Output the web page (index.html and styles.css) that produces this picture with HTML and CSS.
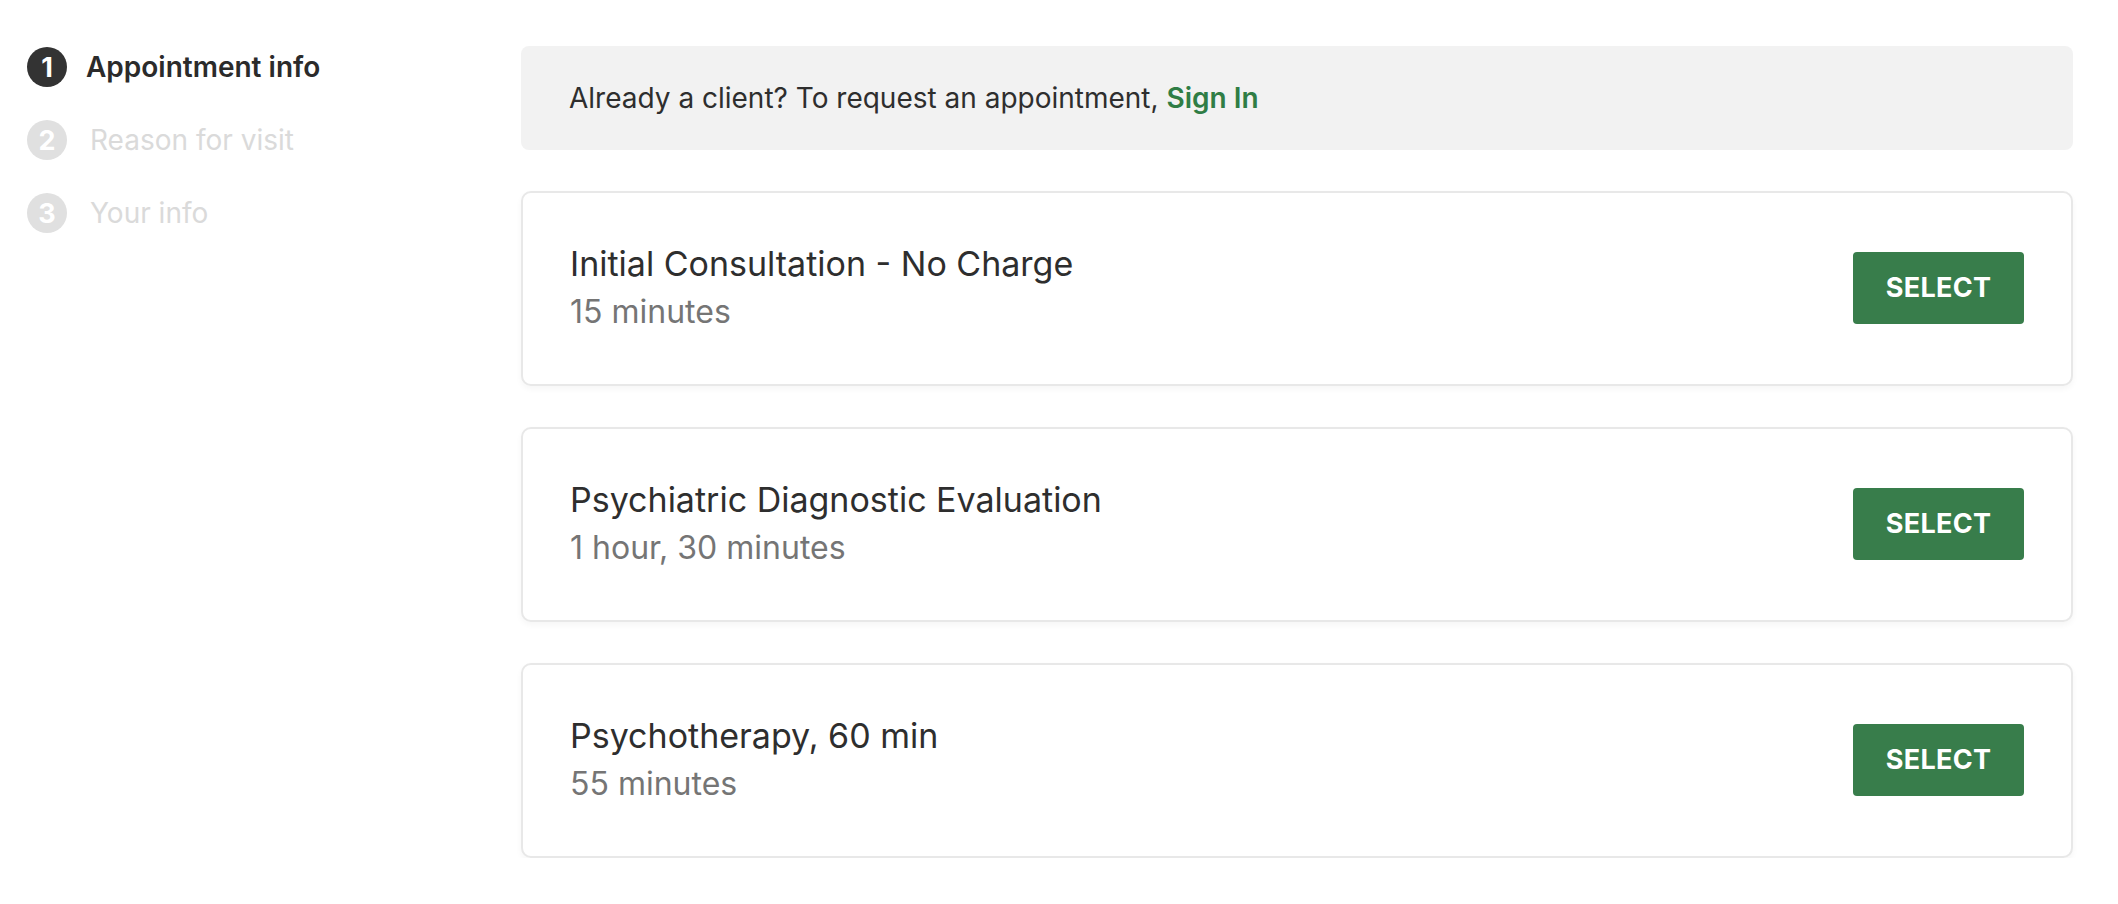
FILE: index.html
```html
<!DOCTYPE html>
<html lang="en">
<head>
<meta charset="utf-8">
<title>Request appointment</title>
<link rel="stylesheet" href="styles.css">
</head>
<body>
<div class="page">
  <nav class="steps">
    <div class="step active"><span class="num">1</span><span class="label">Appointment info</span></div>
    <div class="step"><span class="num">2</span><span class="label">Reason for visit</span></div>
    <div class="step"><span class="num">3</span><span class="label">Your info</span></div>
  </nav>
  <main class="main">
    <div class="banner">Already a client? To request an appointment,&nbsp;<a class="signin" href="#">Sign In</a></div>
    <div class="card">
      <div class="info">
        <div class="title">Initial Consultation - No Charge</div>
        <div class="duration">15 minutes</div>
      </div>
      <button class="select">SELECT</button>
    </div>
    <div class="card">
      <div class="info">
        <div class="title">Psychiatric Diagnostic Evaluation</div>
        <div class="duration">1 hour, 30 minutes</div>
      </div>
      <button class="select">SELECT</button>
    </div>
    <div class="card">
      <div class="info">
        <div class="title">Psychotherapy, 60 min</div>
        <div class="duration">55 minutes</div>
      </div>
      <button class="select">SELECT</button>
    </div>
  </main>
</div>
</body>
</html>
```

FILE: styles.css
```css
* { box-sizing: border-box; }
html, body { margin: 0; padding: 0; background: #fff; }
body {
  font-family: Inter, "Noto Sans", "Liberation Sans", sans-serif;
  color: #2e2e2e;
}
.page {
  display: flex;
  align-items: flex-start;
  padding: 46px 45px 0 27px;
}
.steps {
  width: 494px;
  flex: none;
  display: flex;
  flex-direction: column;
  gap: 33px;
  padding-top: 1px;
}
.step {
  display: flex;
  align-items: center;
  gap: 23px;
  height: 40px;
}
.num {
  width: 40px;
  height: 40px;
  border-radius: 50%;
  background: #e0e0e0;
  color: #fff;
  font-weight: 700;
  font-size: 27px;
  display: flex;
  align-items: center;
  justify-content: center;
}
.label {
  font-size: 28px;
  color: #dadada;
  font-weight: 400;
}
.step.active { gap: 19px; }
.step.active .num { background: #333; }
.step.active .label { color: #2b2b2b; font-weight: 600; }

.main {
  flex: 1;
  display: flex;
  flex-direction: column;
  gap: 41px;
}
.banner {
  height: 104px;
  background: #f2f2f2;
  border-radius: 8px;
  padding: 0 48px;
  display: flex;
  align-items: center;
  font-size: 28px;
  color: #2e2e2e;
}
.signin {
  color: #2f7d45;
  font-weight: 600;
  text-decoration: none;
}
.card {
  height: 195px;
  border: 2px solid #e8e8e8;
  border-radius: 10px;
  box-shadow: 0 3px 6px rgba(0, 0, 0, 0.04);
  padding: 0 47px 2px;
  display: flex;
  align-items: center;
  justify-content: space-between;
  background: #fff;
}
.info { display: flex; flex-direction: column; gap: 5px; }
.title { font-size: 34px; line-height: 44px; color: #2e2e2e; }
.duration { font-size: 32px; line-height: 42px; color: #757575; }
.select {
  width: 171px;
  height: 72px;
  border: none;
  border-radius: 4px;
  background: #387d4b;
  color: #fff;
  font-family: inherit;
  font-size: 27px;
  font-weight: 700;
  letter-spacing: 0.3px;
}
```
